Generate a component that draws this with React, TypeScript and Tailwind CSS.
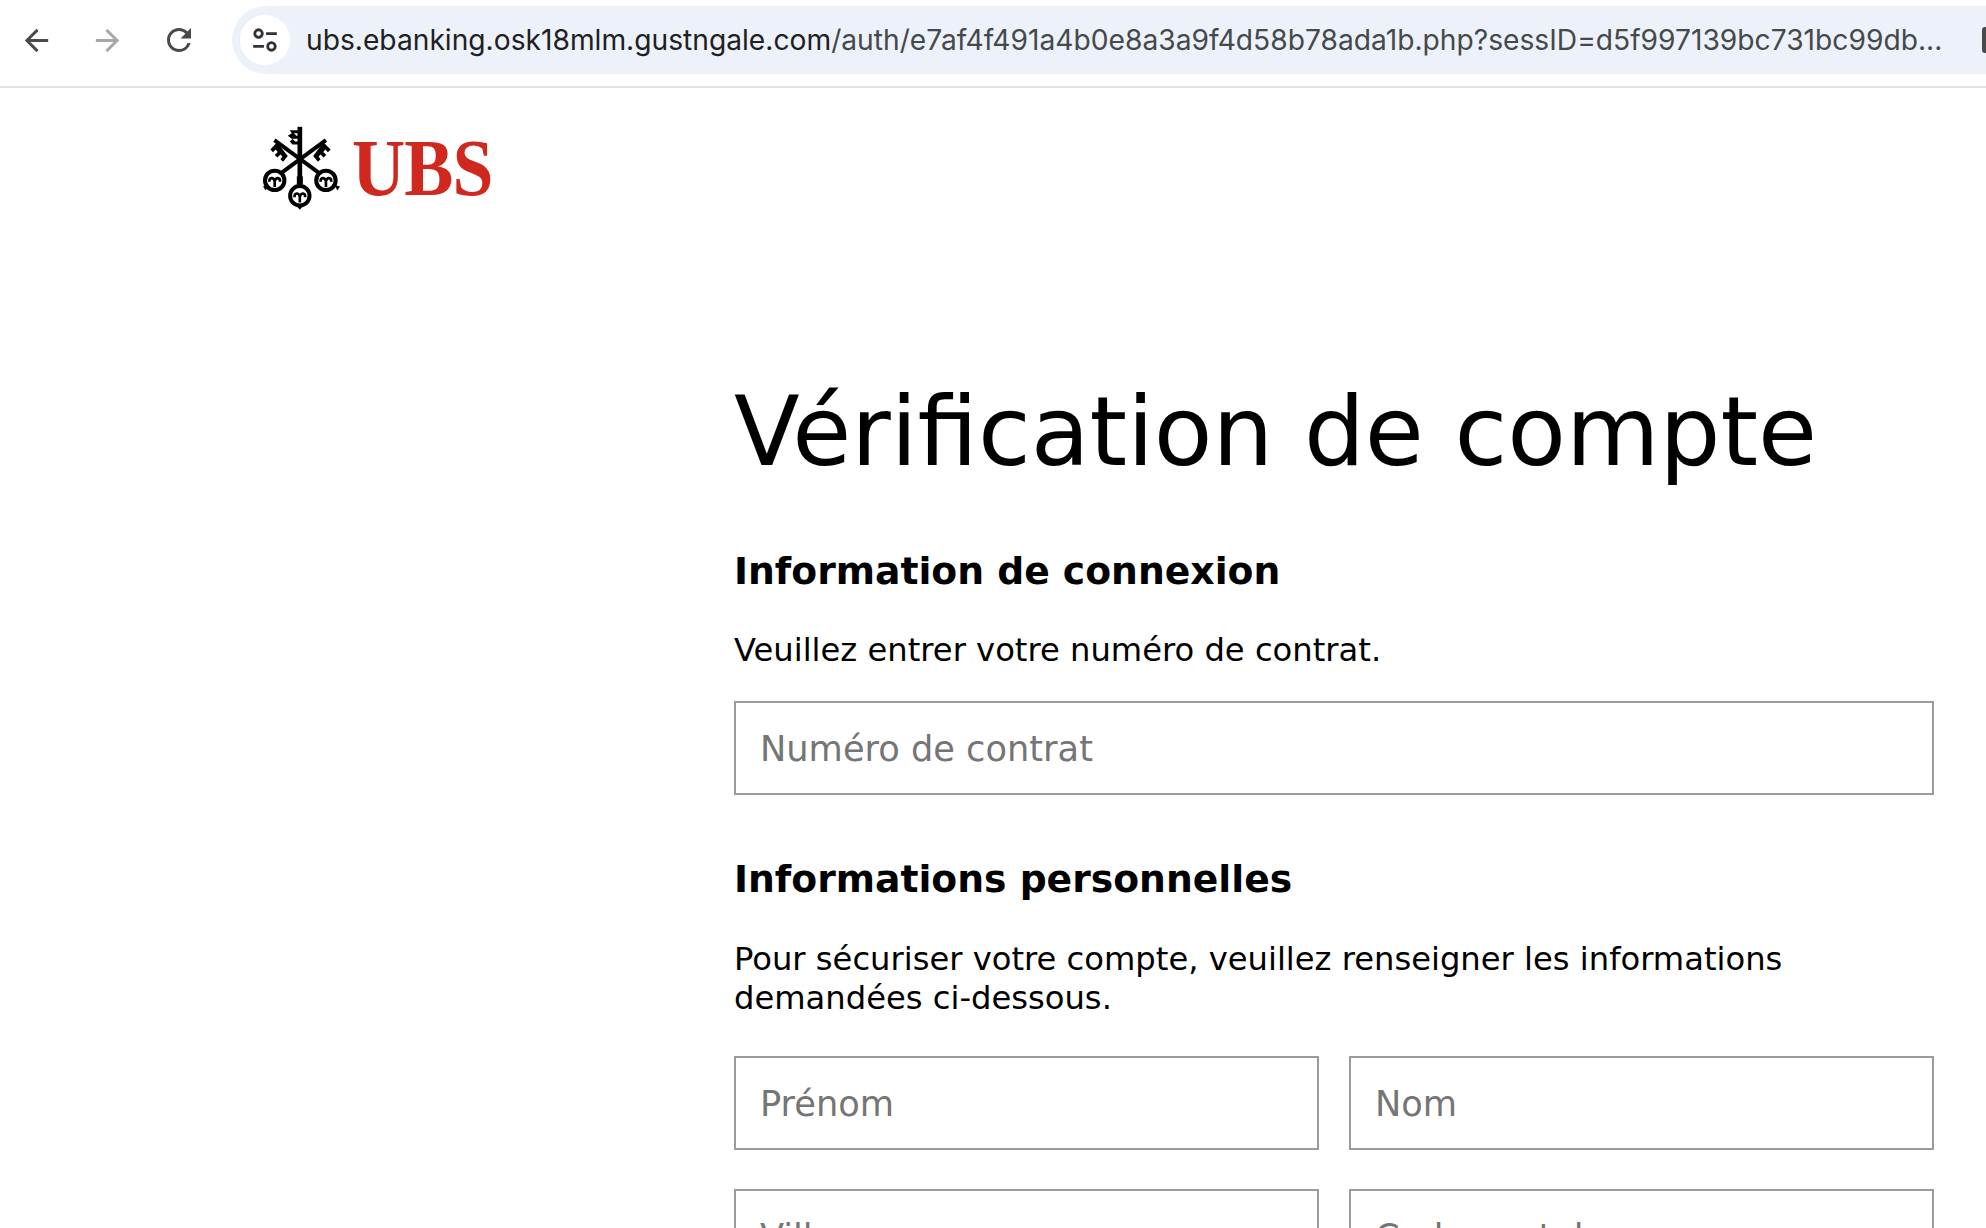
const sans = "font-['DejaVu_Sans',Verdana,sans-serif]"

function Keys() {
  const bows = [
    { cx: 105, cy: 212 },
    { cx: 258, cy: 212 },
    { cx: 180, cy: 258 },
  ]
  return (
    <svg viewBox="70 50 230 250" className="w-[77px] h-[84px]">
      <g stroke="#000" fill="none">
        <path d="M180 52V228" strokeWidth="14" />
        <path d="M124 190L258 92" strokeWidth="12" />
        <path d="M238 190L104 92" strokeWidth="12" />
        {bows.map(b => (
          <circle key={b.cx} cx={b.cx} cy={b.cy} r={29} strokeWidth="12" />
        ))}
        {/* inner ornament of each bow */}
        {bows.map(b => (
          <path
            key={b.cx}
            d={`M${b.cx - 16} ${b.cy + 4}C${b.cx - 16} ${b.cy - 10} ${b.cx - 4} ${b.cy - 10} ${b.cx} ${b.cy + 2}C${b.cx + 4} ${b.cy - 10} ${b.cx + 16} ${b.cy - 10} ${b.cx + 16} ${b.cy + 4}M${b.cx} ${b.cy}V${b.cy + 20}`}
            strokeWidth="8"
          />
        ))}
      </g>
      <g fill="#000">
        {/* teeth */}
        <path d="M150 62h26v9h-14l8 8h6v9h-18l8 8h10v9h-18l-8-9 8-7-14-10 12-8z" />
        <path d="M112 98l-20 22 8 8 8-8 6 7-9 9 8 8 9-9 6 6-6 8 8 7 14-17z" />
        <path d="M250 98l22 22-8 8-8-8-6 7 9 9-8 8-9-9-6 6 6 8-8 7-14-17z" />
        {/* points under the bows */}
        <path d="M170 288h20l-10 12zM70 230l16-4-8 16zM300 230l-16-4 8 16z" />
        <path d="M171 200h18v24h-18z" />
      </g>
    </svg>
  )
}

function Field({ label }: { label: string }) {
  return (
    <div className={`flex-1 h-[94px] border-2 border-[#9b9b9b] px-[24px] pt-[2px] flex items-center text-[35.2px] text-[#757575] ${sans}`}>
      {label}
    </div>
  )
}

export default function App() {
  return (
    <div className="w-[1986px] h-[1228px] overflow-hidden bg-white">
      <div className="h-[88px] border-b-2 border-[#e2e2e2] flex items-start pt-[6px]">
        <div className="w-[232px] h-[68px] flex items-center shrink-0 pl-[19px] gap-[36px]">
          <svg viewBox="0 0 24 24" className="w-[35px] h-[35px] shrink-0" fill="#4a4a4a">
            <path d="M20 11H7.83l5.59-5.59L12 4l-8 8 8 8 1.41-1.41L7.83 13H20v-2z" />
          </svg>
          <svg viewBox="0 0 24 24" className="w-[35px] h-[35px] shrink-0" fill="#a8a8a8">
            <path d="M4 11h12.17l-5.59-5.59L12 4l8 8-8 8-1.41-1.41L16.17 13H4v-2z" />
          </svg>
          <svg viewBox="0 0 24 24" className="w-[36px] h-[36px] shrink-0" fill="#4a4a4a">
            <path d="M17.65 6.35A7.958 7.958 0 0 0 12 4c-4.42 0-7.99 3.58-7.99 8s3.57 8 7.99 8c3.73 0 6.84-2.55 7.73-6h-2.08A5.99 5.99 0 0 1 12 18c-3.31 0-6-2.69-6-6s2.69-6 6-6c1.66 0 3.14.69 4.22 1.78L13 11h7V4l-2.35 2.35z" />
          </svg>
        </div>
        <div className="flex-1 min-w-0 h-[68px] rounded-l-[34px] bg-[#edf2fa] flex items-center pl-[8px]">
          <div className="w-[50px] h-[50px] rounded-full bg-white flex items-center justify-center shrink-0">
            <svg viewBox="0 0 26 26" className="w-[28px] h-[28px]" fill="none" stroke="#2f3236" strokeWidth="2.6">
              <circle cx="7" cy="7" r="3.5" />
              <path d="M14 7h10M2 19h10" />
              <circle cx="19" cy="19" r="3.5" />
            </svg>
          </div>
          <div className="ml-[16px] w-[1640px] shrink-0 text-[28.2px] leading-[68px] whitespace-nowrap font-['Inter',sans-serif] text-[#45484c]">
            <span className="text-[#1f2022]">ubs.ebanking.osk18mlm.gustngale.com</span>
            /auth/e7af4f491a4b0e8a3a9f4d58b78ada1b.php?sessID=d5f997139bc731bc99db...
          </div>
          <div className="ml-[36px] w-[4px] h-[26px] rounded-l-[3px] bg-[#4a4a4a] shrink-0" />
        </div>
      </div>

      <div className="pl-[263px] pt-[38px] flex items-center h-[122px]">
        <Keys />
        <span className="ml-[12px] text-[80px] leading-none text-[#d0281f] font-['Liberation_Serif',serif] font-bold tracking-[-1px] scale-x-[0.92] origin-left">UBS</span>
      </div>

      <div className={`ml-[734px] w-[1200px] text-black ${sans}`}>
        <h1 className="mt-[164px] text-[96px] leading-[116px] font-normal">Vérification de compte</h1>
        <h2 className="mt-[58px] text-[37.7px] leading-[46px] font-bold">Information de connexion</h2>
        <p className="mt-[37px] text-[32.2px] leading-[39px]">Veuillez entrer votre numéro de contrat.</p>
        <div className="mt-[31px] flex">
          <Field label="Numéro de contrat" />
        </div>
        <h2 className="mt-[61px] text-[37.7px] leading-[46px] font-bold">Informations personnelles</h2>
        <p className="mt-[38px] text-[32.2px] leading-[39px]">
          Pour sécuriser votre compte, veuillez renseigner les informations demandées ci-dessous.
        </p>
        <div className="mt-[38px] flex gap-[30px]">
          <Field label="Prénom" />
          <Field label="Nom" />
        </div>
        <div className="mt-[39px] flex gap-[30px]">
          <Field label="Ville" />
          <Field label="Code postal" />
        </div>
      </div>
    </div>
  )
}
